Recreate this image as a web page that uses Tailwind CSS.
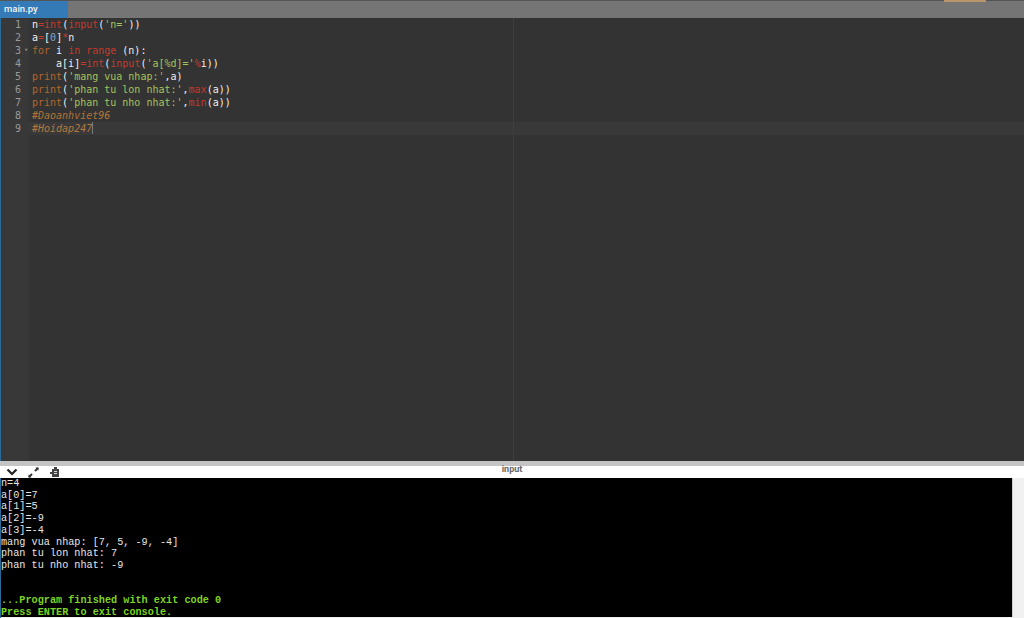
<!DOCTYPE html>
<html lang="en">
  <head>
    <meta charset="UTF-8" />
    <meta name="viewport" content="width=device-width, initial-scale=1.0" />
    <title>main.py</title>
    <script src="https://cdn.jsdelivr.net/npm/@tailwindcss/browser@4"></script>
  </head>

  <body class="w-[1024px] h-[618px] overflow-hidden bg-white flex flex-col">
    <!-- tab bar -->
    <div class="h-[18px] shrink-0 bg-[#757575] border-t border-[#555] flex relative">
      <div class="w-[68px] bg-[#337ab7] text-[#f4f4f4] text-[9.5px] font-medium pl-[4px] leading-[15px] font-['Roboto',sans-serif]">main.py</div>
      <div class="absolute right-[38px] top-[-1px] w-[42px] h-[2px] bg-[#b8956a]"></div>
    </div>

    <!-- editor -->
    <div class="h-[443px] shrink-0 flex bg-[#333333] border-l border-[#2a6a9a] relative font-['DejaVu_Sans_Mono',monospace] text-[10px] leading-[13px] font-medium">
      <div class="w-[28px] shrink-0 bg-[#383838] text-[#9a9a9a] text-right pr-[8px]">
        <div class="h-[13px]">1</div>
        <div class="h-[13px]">2</div>
        <div class="h-[13px] relative">3<span class="absolute left-[23px] top-0 text-[7px] text-[#888]">▾</span></div>
        <div class="h-[13px]">4</div>
        <div class="h-[13px]">5</div>
        <div class="h-[13px]">6</div>
        <div class="h-[13px]">7</div>
        <div class="h-[13px]">8</div>
        <div class="h-[13px]">9</div>
      </div>
      <div class="flex-1 pl-[3px] text-[#f0f0f0]">
        <div class="h-[13px] whitespace-pre">n<span class="text-[#c7382c]">=int</span>(<span class="text-[#c7382c]">input</span>(<span class="text-[#a5c25c]">'n='</span>))</div>
        <div class="h-[13px] whitespace-pre">a<span class="text-[#c7382c]">=</span>[<span class="text-[#7aa6c9]">0</span>]<span class="text-[#c7382c]">*</span>n</div>
        <div class="h-[13px] whitespace-pre"><span class="text-[#b5652a]">for</span> i <span class="text-[#c7382c]">in</span> <span class="text-[#c7382c]">range</span> (n):</div>
        <div class="h-[13px] whitespace-pre">    a[i]<span class="text-[#c7382c]">=int</span>(<span class="text-[#c7382c]">input</span>(<span class="text-[#a5c25c]">'a[%d]='</span><span class="text-[#c7382c]">%</span>i))</div>
        <div class="h-[13px] whitespace-pre"><span class="text-[#b5652a]">print</span>(<span class="text-[#a5c25c]">'mang vua nhap:'</span>,a)</div>
        <div class="h-[13px] whitespace-pre"><span class="text-[#b5652a]">print</span>(<span class="text-[#a5c25c]">'phan tu lon nhat:'</span>,<span class="text-[#c7382c]">max</span>(a))</div>
        <div class="h-[13px] whitespace-pre"><span class="text-[#b5652a]">print</span>(<span class="text-[#a5c25c]">'phan tu nho nhat:'</span>,<span class="text-[#c7382c]">min</span>(a))</div>
        <div class="h-[13px] whitespace-pre italic text-[#b0743a]">#Daoanhviet96</div>
        <div class="h-[13px] whitespace-pre italic text-[#b0743a] flex">#Hoidap247<span class="w-[1px] h-[12px] bg-[#777]"></span></div>
      </div>
      <!-- active line and print margin -->
      <div class="absolute left-[28px] right-0 top-[104px] h-[13px] bg-white/[0.03]"></div>
      <div class="absolute left-[512px] top-0 bottom-0 w-[1px] bg-[#3e3e3e]"></div>
    </div>

    <!-- console header -->
    <div class="h-[5px] shrink-0 bg-[#c4c4c4]"></div>
    <div class="h-[12px] shrink-0 bg-white flex items-center relative">
      <div class="flex items-center gap-[10px] pl-[6px]">
        <svg width="12" height="8" viewBox="0 0 12 8"><path d="M1.5 1.500 6 6l4.500-4.500" fill="none" stroke="#222" stroke-width="2.200"/></svg>
        <svg width="11" height="11" viewBox="0 0 11 11"><path d="M1 10 4 7" fill="none" stroke="#333" stroke-width="2"/><path d="M7 4l3-3" fill="none" stroke="#333" stroke-width="2"/><path d="M0.500 7.500v3h3zM10.500 3.500v-3h-3z" fill="#333"/></svg>
        <svg width="11" height="12" viewBox="0 0 11 12"><path d="M5 1h3v2h2v8H3V8H1V6h2V3h2z" fill="#444"/><path d="M5 5h3v1H5zM5 7h3v1H5z" fill="#ddd"/></svg>
      </div>
      <div class="absolute left-0 right-0 top-[-3px] text-center text-[9px] font-bold text-[#666] leading-[12px] font-['Roboto',sans-serif]">input</div>
    </div>

    <!-- console -->
    <div class="flex-1 flex min-h-0 bg-[#f1f1f1] border-l border-[#2a6a9a] pb-[1px]">
      <div class="w-[1011px] bg-black text-[#e6e6e6] font-['Liberation_Mono',monospace] text-[10.2px] leading-[11.7px] font-medium">
        <div class="whitespace-pre">n=4</div>
        <div class="whitespace-pre">a[0]=7</div>
        <div class="whitespace-pre">a[1]=5</div>
        <div class="whitespace-pre">a[2]=-9</div>
        <div class="whitespace-pre">a[3]=-4</div>
        <div class="whitespace-pre">mang vua nhap: [7, 5, -9, -4]</div>
        <div class="whitespace-pre">phan tu lon nhat: 7</div>
        <div class="whitespace-pre">phan tu nho nhat: -9</div>
        <div class="h-[23.4px]"></div>
        <div class="whitespace-pre text-[#7ed321] font-bold">...Program finished with exit code 0</div>
        <div class="whitespace-pre text-[#7ed321] font-bold">Press ENTER to exit console.</div>
      </div>
      <div class="w-[1px] bg-[#cfcfcf]"></div>
    </div>
  </body>
</html>
